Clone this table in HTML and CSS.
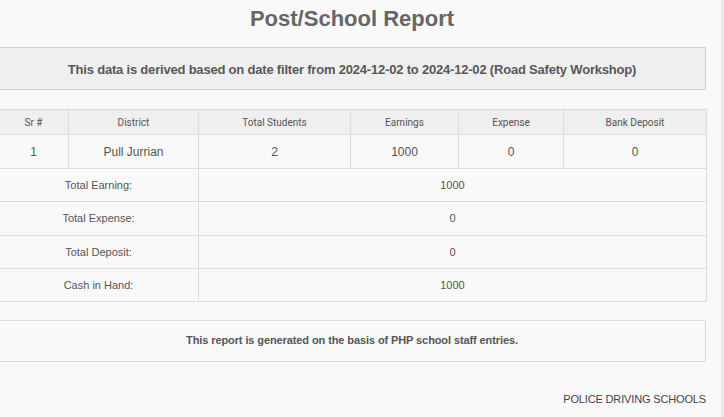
FILE: index.html
```html
<!DOCTYPE html>
<html>
<head>
<meta charset="utf-8">
<link rel="stylesheet" href="styles.css">
</head>
<body>
<div class="page">
  <div class="content">
    <h1 class="title">Post/School Report</h1>
    <div class="filter">This data is derived based on date filter from 2024-12-02 to 2024-12-02 (Road Safety Workshop)</div>
    <table class="report">
      <colgroup>
        <col class="c1"><col class="c2"><col class="c3"><col class="c4"><col class="c5"><col class="c6">
      </colgroup>
      <thead>
        <tr>
          <th>Sr #</th><th>District</th><th>Total Students</th><th>Earnings</th><th>Expense</th><th>Bank Deposit</th>
        </tr>
      </thead>
      <tbody>
        <tr class="data">
          <td>1</td><td>Pull Jurrian</td><td>2</td><td>1000</td><td>0</td><td>0</td>
        </tr>
        <tr class="sum"><td colspan="2">Total Earning:</td><td colspan="4">1000</td></tr>
        <tr class="sum"><td colspan="2">Total Expense:</td><td colspan="4">0</td></tr>
        <tr class="sum"><td colspan="2">Total Deposit:</td><td colspan="4">0</td></tr>
        <tr class="sum"><td colspan="2">Cash in Hand:</td><td colspan="4">1000</td></tr>
      </tbody>
    </table>
    <div class="note">This report is generated on the basis of PHP school staff entries.</div>
    <div class="brand">POLICE DRIVING SCHOOLS</div>
  </div>
</div>
</body>
</html>
```

FILE: styles.css
```css
html, body {
  margin: 0;
  padding: 0;
  background: #f9f9f9;
  overflow: hidden;
}
body {
  font-family: "Liberation Sans", Arial, sans-serif;
  color: #555;
}
.page {
  width: 724px;
  height: 417px;
  box-sizing: border-box;
  border-right: 3px solid #ebebeb;
  overflow: hidden;
}
.content {
  width: 708px;
  margin-left: -2px;
}
.title {
  margin: 0;
  padding-top: 6px;
  font-size: 22px;
  line-height: 26px;
  font-weight: bold;
  color: #666;
  text-align: center;
}
.filter {
  margin-top: 15px;
  height: 41px;
  line-height: 43px;
  background: #efefef;
  border: 1px solid #d0d0d0;
  text-align: center;
  font-size: 13px;
  letter-spacing: -0.2px;
  font-weight: bold;
  color: #585858;
}
.report {
  margin-top: 19px;
  width: 708px;
  border-collapse: collapse;
  table-layout: fixed;
}
.c1 { width: 70px; }
.c2 { width: 130px; }
.c3 { width: 152px; }
.c4 { width: 108px; }
.c5 { width: 105px; }
.c6 { width: 143px; }
.report th, .report td {
  border: 1px solid #dcdcdc;
  text-align: center;
  padding: 0;
}
.report th {
  background: #efefef;
  height: 24px;
  font-family: Roboto, "Liberation Sans", sans-serif;
  font-size: 10px;
  font-weight: normal;
  color: #555;
}
.report td {
  font-size: 11px;
  color: #555;
}
.report tr.data td {
  height: 33px;
  font-size: 12px;
}
.report tr.sum td {
  height: 32.25px;
}
.note {
  margin-top: 18px;
  height: 40px;
  line-height: 38px;
  border: 1px solid #dcdcdc;
  text-align: center;
  font-size: 11px;
  letter-spacing: -0.1px;
  font-weight: bold;
  color: #555;
}
.brand {
  margin-top: 31px;
  text-align: right;
  font-size: 11px;
  letter-spacing: -0.15px;
  color: #444;
}
```
